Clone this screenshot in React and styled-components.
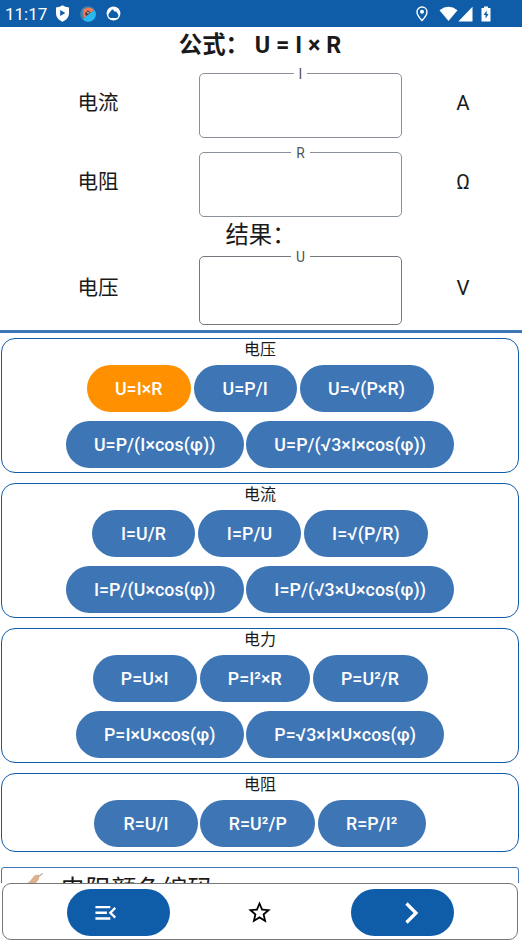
import React from "react";
import styled, { createGlobalStyle } from "styled-components";
import { MdMenuOpen, MdStarBorder } from "react-icons/md";

const BLUE = "#0f5da9";
const MID_BLUE = "#3e75b5";

const GlobalStyle = createGlobalStyle`
  * { box-sizing: border-box; }
  body {
    margin: 0;
    background: #fff;
    color: #1a1a1a;
    font-family: Roboto, "Noto Sans CJK SC", sans-serif;
  }
  button { font: inherit; border: 0; padding: 0; cursor: pointer; }
`;

const Screen = styled.div`
  width: 522px;
  height: 940px;
  display: flex;
  flex-direction: column;
  overflow: hidden;
  background: #fff;
`;

const StatusBar = styled.header`
  flex: none;
  height: 27px;
  padding: 0 31px 0 5px;
  display: flex;
  align-items: center;
  justify-content: space-between;
  background: ${BLUE};
  color: #fff;
`;

const StatusSide = styled.div`
  display: flex;
  align-items: center;
  svg { display: block; }
`;

const Clock = styled.span`
  width: 50px;
  font-size: 17px;
  line-height: 27px;
  padding-top: 1px;
`;

const Icon = styled.svg`
  flex: none;
  margin-left: ${(p) => p.$gap || 0}px;
`;

const Title = styled.h1`
  flex: none;
  margin: 0;
  height: 35px;
  padding-right: 2px;
  font-size: 23.4px;
  font-weight: 700;
  line-height: 37px;
  text-align: center;
  white-space: pre;
`;

const FieldRow = styled.div`
  flex: none;
  display: grid;
  grid-template-columns: 196px 203px 122px;
  column-gap: 3px;
  align-items: center;
  height: ${(p) => p.$height}px;
  margin-top: ${(p) => p.$top}px;
  font-size: 20.5px;
`;

const Label = styled.span`
  text-align: center;
  line-height: 28px;
  margin-top: 2px;
`;

const Unit = styled.span`
  text-align: center;
  line-height: 28px;
  margin: 2px 3px 0 -3px;
`;

const Field = styled.fieldset`
  min-width: 0;
  height: 100%;
  margin: 0;
  padding: 0;
  border: 1px solid ${(p) => (p.$result ? "#747980" : "#8a9097")};
  border-radius: 5px;
`;

const Legend = styled.legend`
  margin: 0 auto;
  padding: 0 5px;
  height: 14px;
  font-size: 13.8px;
  line-height: 17px;
  color: #4e5359;
`;

const ResultHeading = styled.div`
  flex: none;
  height: 32px;
  padding-right: 1px;
  font-size: 23.4px;
  line-height: 37px;
  text-align: center;
`;

const Formulas = styled.main`
  flex: 1;
  min-height: 0;
  overflow: hidden;
  margin-top: 5px;
  padding: 5px 3px 0 1px;
  border-top: 3px solid ${MID_BLUE};
`;

const Group = styled.section`
  height: ${(p) => p.$height}px;
  margin-bottom: 10px;
  border: 1.4px solid ${BLUE};
  border-radius: 14px;
`;

const GroupTitle = styled.h2`
  margin: 0;
  height: 26px;
  font-size: 16px;
  font-weight: 400;
  line-height: 21px;
  text-align: center;
`;

const ChipRow = styled.div`
  display: flex;
  justify-content: center;
  gap: 2.5px;
  height: 47px;
  margin-bottom: 9.4px;
`;

const Chip = styled.button`
  width: ${(p) => p.$width}px;
  height: 47px;
  border-radius: 24px;
  background: ${(p) => (p.$active ? "#ff9100" : MID_BLUE)};
  color: #fff;
  && {
    font-size: 17.8px;
    font-weight: 500;
    letter-spacing: 0.08px;
  }
  white-space: nowrap;
`;

const NextCard = styled.section`
  display: flex;
  align-items: flex-start;
  height: 60px;
  margin-top: 15px;
  padding: 5px 0 0 23px;
  border: 1px solid ${MID_BLUE};
  border-radius: 3px;
`;

const CardTitle = styled.span`
  margin-left: 15px;
  font-size: 25.5px;
  line-height: 32px;
  white-space: nowrap;
`;

const BottomBar = styled.nav`
  flex: none;
  display: grid;
  grid-template-columns: 103px 181px 103px;
  justify-content: center;
  align-items: center;
  width: 516px;
  height: 57px;
  margin-left: 2px;
  padding-top: 2px;
  border: 1px solid #777;
  border-radius: 9px;
  background: #fff;
`;

const NavButton = styled.button`
  display: flex;
  align-items: center;
  height: 47px;
  padding-left: ${(p) => p.$inset}px;
  border-radius: 24px;
  background: ${BLUE};
  color: #fff;
`;

const StarButton = styled.button`
  display: flex;
  justify-content: center;
  padding-right: 1px;
  background: none;
  color: #000;
`;

const groups = [
  {
    name: "电压",
    height: 135,
    rows: [
      [["U=I×R", 104.5], ["U=P/I", 103.5], ["U=√(P×R)", 134]],
      [["U=P/(I×cos(φ))", 178], ["U=P/(√3×I×cos(φ))", 208]],
    ],
  },
  {
    name: "电流",
    height: 135,
    rows: [
      [["I=U/R", 103.5], ["I=P/U", 103.5], ["I=√(P/R)", 124.5]],
      [["I=P/(U×cos(φ))", 178], ["I=P/(√3×U×cos(φ))", 208]],
    ],
  },
  {
    name: "电力",
    height: 135,
    rows: [
      [["P=U×I", 104.5], ["P=I²×R", 110.5], ["P=U²/R", 115]],
      [["P=I×U×cos(φ)", 168], ["P=√3×I×U×cos(φ)", 198]],
    ],
  },
  {
    name: "电阻",
    height: 79,
    rows: [[["R=U/I", 103.5], ["R=U²/P", 115], ["R=P/I²", 108]]],
  },
];

function InputRow({ label, symbol, unit, height, top, result }) {
  return (
    <FieldRow $height={height} $top={top}>
      <Label>{label}</Label>
      <Field $result={result}>
        <Legend>{symbol}</Legend>
      </Field>
      <Unit>{unit}</Unit>
    </FieldRow>
  );
}

function StatusIcons() {
  return (
    <StatusBar>
      <StatusSide>
        <Clock>11:17</Clock>
        <Icon width="15" height="17" viewBox="0 0 15 17">
          <path d="M7.5 .3Q10 2.300 14 2.500V8c0 4.200-2.700 7.200-6.500 8.700C3.700 15.200 1 12.200 1 8V2.500Q5 2.300 7.500.3Z" fill="#fff" />
          <path d="M5.200 4.900v6.200L10.300 8Z" fill={BLUE} />
        </Icon>
        <Icon $gap={10} width="16" height="16" viewBox="0 0 16 16">
          <circle cx="8" cy="8" r="7.800" fill="#4d7fa5" />
          <path d="M3.200 3.500Q8 .2 13 3L13.500 4.500 4.500 12.500Q2.500 9 3.200 3.500Z" fill="#ef7856" />
          <path d="M14.500 4A7.500 7.500 0 0 1 3.500 14L3 13Z" fill="#25b9f5" />
          <path d="M4.800 7.500 8 4.500 10.500 6.500 6.500 10Z" fill="#3b3b46" />
          <circle cx="8" cy="6.700" r=".8" fill="#fff" />
        </Icon>
        <Icon $gap={10} width="15" height="15" viewBox="0 0 15 15">
          <circle cx="7.500" cy="7.500" r="6.900" fill="#fff" />
          <path d="M4.700 12a2.900 2.900 0 0 1-1.800-4.500L5.800 3.800 7 3.600l1.500 1.800 1.700.2 2 2.800a2.600 2.600 0 0 1-2 3.600Z" fill={BLUE} />
        </Icon>
      </StatusSide>
      <StatusSide>
        <Icon width="12" height="16" viewBox="0 0 12 16">
          <path d="M6 1C3.200 1 1 3.100 1 5.900 1 9.200 6 14.500 6 14.500s5-5.300 5-8.600C11 3.100 8.800 1 6 1Z" fill="none" stroke="#fff" strokeWidth="1.400" />
          <circle cx="6" cy="5.700" r="2" fill="#fff" />
        </Icon>
        <Icon $gap={11} width="19" height="16" viewBox="0 0 19 16">
          <path d="M.5 4.200Q9.500-2.500 18.500 4.200L9.500 15Z" fill="#fff" />
        </Icon>
        <Icon $gap={0.5} width="15" height="16" viewBox="0 0 15 16">
          <path d="M14.500.8V15.500H.3Z" fill="#fff" />
        </Icon>
        <Icon $gap={8} width="10" height="16" viewBox="0 0 10 16">
          <path d="M3 .5h4V2h2.500v13.500H.5V2H3Z" fill="#fff" />
          <path d="M5.700 4.500 2.600 9h2V12.500l3-4.500H5.700Z" fill={BLUE} />
        </Icon>
      </StatusSide>
    </StatusBar>
  );
}

export default function App() {
  return (
    <Screen>
      <GlobalStyle />
      <StatusIcons />
      <Title>公式： U = I × R</Title>
      <InputRow label="电流" symbol="I" unit="A" height={72} top={4} />
      <InputRow label="电阻" symbol="R" unit="Ω" height={72} top={7} />
      <ResultHeading>结果：</ResultHeading>
      <InputRow label="电压" symbol="U" unit="V" height={76} top={0} result />
      <Formulas>
        {groups.map((group) => (
          <Group key={group.name} $height={group.height}>
            <GroupTitle>{group.name}</GroupTitle>
            {group.rows.map((row, i) => (
              <ChipRow key={i}>
                {row.map(([formula, width]) => (
                  <Chip key={formula} $width={width} $active={formula === "U=I×R"}>
                    {formula}
                  </Chip>
                ))}
              </ChipRow>
            ))}
          </Group>
        ))}
        <NextCard>
          <Icon width="20" height="24" viewBox="0 0 20 24">
            <path d="M0 12Q6 8 8 4q2-3 6-2v4q-2 4-6 6Z" fill="#dfb08e" />
            <path d="M13 4 17.500 .5" stroke="#b9aaa0" strokeWidth="1.200" />
          </Icon>
          <CardTitle>电阻颜色编码</CardTitle>
        </NextCard>
      </Formulas>
      <BottomBar>
        <NavButton $inset={25} aria-label="menu">
          <MdMenuOpen size={27.5} />
        </NavButton>
        <StarButton aria-label="favorite">
          <MdStarBorder size={27} />
        </StarButton>
        <NavButton $inset={53} aria-label="next">
          <Icon width="16" height="24" viewBox="0 0 16 24">
            <path d="M2.500 2.500 12 12 2.500 21.500" fill="none" stroke="#fff" strokeWidth="3.200" />
          </Icon>
        </NavButton>
      </BottomBar>
    </Screen>
  );
}
